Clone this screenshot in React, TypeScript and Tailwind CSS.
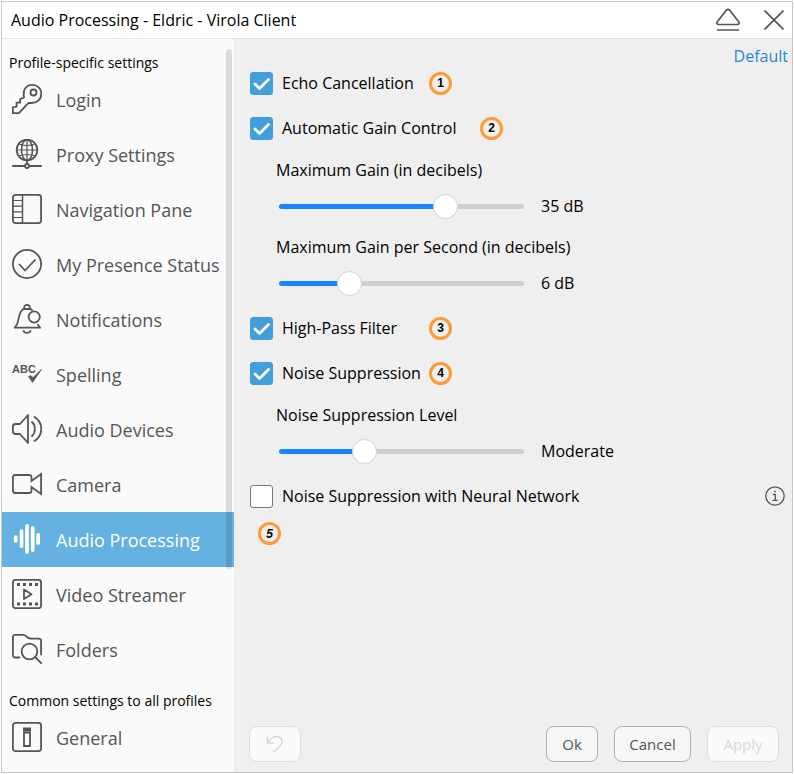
import { useState } from "react";
import type { CSSProperties, ReactNode } from "react";

function Icon({ children }: { children: ReactNode }) {
  return (
    <svg
      aria-hidden="true"
      className="mb-[2px] size-[30px] shrink-0"
      viewBox="0 0 30 30"
      fill="none"
      stroke="currentColor"
      strokeWidth="1.800"
      strokeLinejoin="round"
      strokeLinecap="round"
    >
      {children}
    </svg>
  );
}

const holes = [5, 11, 17, 23];

const profileItems: { label: string; icon: ReactNode }[] = [
  {
    label: "Login",
    icon: (
      <Icon>
        <path
          strokeLinejoin="miter"
          d="M12 13.200C10.600 6 14 .9 20.300.9c5.200 0 9 3.600 9 8.800 0 5.400-4 9.300-9.500 9.300h-3.200L6.800 29.200H.9v-5.700l3.700-1v-3.900h3.500v-3.400z"
        />
        <circle cx="21.500" cy="8.500" r="3" />
      </Icon>
    ),
  },
  {
    label: "Proxy Settings",
    icon: (
      <Icon>
        <circle cx="15" cy="11" r="10.300" />
        <ellipse cx="15" cy="11" rx="5.500" ry="10.300" strokeWidth="1.500" />
        <path d="M15 .5v21M7 5c4.500 2 11.500 2 16 0M7 17c4.500-2 11.500-2 16 0M4.500 11h21" strokeWidth="1.200" />
        <circle cx="15" cy="27" r="2" />
        <path d="M15 21.500V25M.9 27H13M17 27h12.200" />
      </Icon>
    ),
  },
  {
    label: "Navigation Pane",
    icon: (
      <Icon>
        <rect x=".9" y=".9" width="28.200" height="28.200" rx="2.500" />
        <path d="M10.500 1v28" strokeWidth="1.500" />
        <path d="M1 6.500h9.500M1 12.200h9.500M1 17.800h9.500M1 23.500h9.500" strokeWidth="1.200" />
      </Icon>
    ),
  },
  {
    label: "My Presence Status",
    icon: (
      <Icon>
        <circle cx="15" cy="15" r="14.100" />
        <path d="m7.500 15.500 5.500 6L23 11" />
      </Icon>
    ),
  },
  {
    label: "Notifications",
    icon: (
      <Icon>
        <path d="M12 5C12 2.500 13 .9 15 .9S18 2.500 18 5zM11.500 5C8 7 7.200 11 6.500 15c-.5 4-1.300 6-3.800 8.700h25.400c-.9-1-1.600-1.800-2.100-3M18.500 5l1.500 1" />
        <circle cx="22.200" cy="13" r="5.600" />
        <path d="M11.500 27c1.500 2.600 5.500 2.600 7 0" />
      </Icon>
    ),
  },
  {
    label: "Spelling",
    icon: (
      <Icon>
        <text
          x="0"
          y="14"
          fill="currentColor"
          stroke="none"
          fontFamily="Liberation Sans, sans-serif"
          fontWeight="700"
          fontSize="11"
        >
          ABC
        </text>
        <path d="m17 17.500 2-.8 2 2.100L29.300 10.500 20.700 23z" fill="currentColor" strokeWidth="1" />
      </Icon>
    ),
  },
  {
    label: "Audio Devices",
    icon: (
      <Icon>
        <path d="M16 1v28l-8-9H3.700C2 20 .9 19 .9 17.500v-5c0-1.500 1.100-2.500 2.800-2.500H8z" />
        <path d="M20 8c3.800 3.500 3.800 10.500 0 14M22.500 3c9 5.500 9 18.500 0 24" />
      </Icon>
    ),
  },
  {
    label: "Camera",
    icon: (
      <Icon>
        <path
          strokeLinejoin="miter"
          d="M19.500 12V8.500c0-1.600-.8-2.500-2.300-2.500h-14C1.700 6 .9 6.900.9 8.500v13C.9 23.100 1.700 24 3.200 24h14c1.500 0 2.300-.9 2.300-2.500V18l9.600 7V5z"
        />
      </Icon>
    ),
  },
  {
    label: "Audio Processing",
    icon: (
      <Icon>
        <path d="M3.700 13v4M9.500 7.200v15M15 1.900v26.200M20.700 3.900v22.200M26.200 10.800V19" strokeWidth="3.700" />
      </Icon>
    ),
  },
  {
    label: "Video Streamer",
    icon: (
      <Icon>
        <rect x=".9" y=".9" width="28.200" height="28.200" rx="2.500" />
        <path d="M12 10.500v9.500l7.500-4.800z" />
        {holes.map((x) => (
          <g key={x} fill="currentColor" stroke="none">
            <rect x={x} y="4" width="3" height="3" />
            <rect x={x} y="23.500" width="3" height="3" />
          </g>
        ))}
      </Icon>
    ),
  },
  {
    label: "Folders",
    icon: (
      <Icon>
        <path d="M7.500 23.500H3.200C1.700 23.500.9 22.500.9 21V3.200C.9 1.700 1.700.9 3.200.9h8.300c2.500 0 3.500 3.500 7 3.700h8.200c1.500 0 2.400.9 2.400 2.400V20.500" />
        <circle cx="17.500" cy="17.500" r="7.800" />
        <path d="m23 23 6.200 6.200" />
      </Icon>
    ),
  },
];

function NavItem({ label, icon, active, onSelect }: { label: string; icon: ReactNode; active: boolean; onSelect: () => void }) {
  return (
    <button
      type="button"
      aria-current={active ? "page" : undefined}
      onClick={onSelect}
      className={
        active
          ? "flex h-[55px] w-full items-center gap-[14px] bg-[#65b1e1] px-[10px] text-left text-lg whitespace-nowrap text-white"
          : "flex h-[55px] w-full items-center gap-[14px] px-[10px] text-left text-lg whitespace-nowrap text-[#555]"
      }
    >
      {icon}
      {label}
    </button>
  );
}

function Badge({ children, italic }: { children: ReactNode; italic?: boolean }) {
  return (
    <span
      className={
        italic
          ? "flex size-[23px] items-center justify-center rounded-full border-3 border-[#ff9a35] font-['Liberation_Sans',sans-serif] text-xs font-bold italic"
          : "flex size-[23px] items-center justify-center rounded-full border-3 border-[#ff9a35] font-['Liberation_Sans',sans-serif] text-xs font-bold"
      }
    >
      {children}
    </span>
  );
}

function CheckRow({ label, initial, wide, children }: { label: string; initial: boolean; wide?: boolean; children?: ReactNode }) {
  const [checked, setChecked] = useState(initial);
  return (
    <div className="flex h-6 items-center">
      <label className="flex items-center gap-[9px] whitespace-nowrap">
        <span className="grid place-items-center">
          <input
            type="checkbox"
            checked={checked}
            onChange={(e) => setChecked(e.target.checked)}
            className="peer col-start-1 row-start-1 size-[23px] appearance-none rounded-[3px] border border-[#777] bg-white checked:border-[#419fdb] checked:bg-[#419fdb]"
          />
          <svg
            aria-hidden="true"
            viewBox="0 0 23 23"
            fill="none"
            stroke="white"
            strokeWidth="2.800"
            strokeLinecap="round"
            strokeLinejoin="round"
            className="pointer-events-none invisible col-start-1 row-start-1 size-[23px] peer-checked:visible"
          >
            <path d="m5 12 4.500 4.500L18.500 7.500" />
          </svg>
        </span>
        <span className={wide ? "w-[198px]" : "min-w-[147px]"}>{label}</span>
      </label>
      {children}
    </div>
  );
}

interface SliderProps {
  id: string;
  label: string;
  min: number;
  max: number;
  initial: number;
  format: (value: number) => string;
}

function SliderField({ id, label, min, max, initial, format }: SliderProps) {
  const [value, setValue] = useState(initial);
  const fill = { "--fill": `${((value - min) / (max - min)) * 100}%` } as CSSProperties;
  return (
    <div className="pl-[26px]">
      <label htmlFor={id} className="flex h-10 items-center">
        {label}
      </label>
      <div className="flex h-8 items-center gap-[17px] pl-[3px]">
        <input
          id={id}
          type="range"
          min={min}
          max={max}
          value={value}
          onChange={(e) => setValue(Number(e.target.value))}
          style={fill}
          className="h-[25px] w-[245px] appearance-none bg-transparent [&::-webkit-slider-runnable-track]:h-[5px] [&::-webkit-slider-runnable-track]:rounded-full [&::-webkit-slider-runnable-track]:bg-[linear-gradient(to_right,#1a84ff_var(--fill),#cfcfcf_var(--fill))] [&::-webkit-slider-thumb]:-mt-[10px] [&::-webkit-slider-thumb]:size-[25px] [&::-webkit-slider-thumb]:appearance-none [&::-webkit-slider-thumb]:rounded-full [&::-webkit-slider-thumb]:border [&::-webkit-slider-thumb]:border-[#d4d4d4] [&::-webkit-slider-thumb]:bg-white"
        />
        <output htmlFor={id}>{format(value)}</output>
      </div>
    </div>
  );
}

const levels = ["Low", "Moderate", "High", "Very High"];

export default function App() {
  const [active, setActive] = useState("Audio Processing");
  return (
    <div className="flex min-h-screen bg-white p-px font-['Open_Sans','Noto_Sans',sans-serif] text-base leading-5 text-black">
      <div className="flex grow flex-col border border-[#c8c8c8]">
        <header className="flex h-[37px] items-center justify-between border-b border-[#e4e4e4] bg-white pr-2 pl-[9px]">
          <h1>Audio Processing - Eldric - Virola Client</h1>
          <div className="flex items-center gap-6 text-[#555]">
            <button type="button" aria-label="Keep on top">
              <svg viewBox="0 0 24 24" className="size-6" fill="none" stroke="currentColor" strokeWidth="1.700" strokeLinejoin="round">
                <path d="M10.300 2.300 1.500 13.500C.4 15.200 1 16.500 2.700 16.500h18.600c1.700 0 2.300-1.300 1.200-3L13.700 2.300c-1-1.200-2.400-1.200-3.400 0zM1 22h22" />
              </svg>
            </button>
            <button type="button" aria-label="Close">
              <svg viewBox="0 0 20 20" className="size-5" fill="none" stroke="currentColor" strokeWidth="1.700">
                <path d="m.5.5 19 19M19.500.5l-19 19" />
              </svg>
            </button>
          </div>
        </header>

        <div className="flex grow">
          <nav aria-label="Settings" className="relative w-[232px] shrink-0 bg-[#fafafa]">
            <h2 className="flex h-[33px] items-end px-[7px] text-sm leading-[18px]">Profile-specific settings</h2>
            {profileItems.map((item) => (
              <NavItem key={item.label} {...item} active={active === item.label} onSelect={() => setActive(item.label)} />
            ))}
            <h2 className="flex h-[33px] items-end px-[7px] text-sm leading-[18px]">Common settings to all profiles</h2>
            <NavItem
              label="General"
              active={active === "General"}
              onSelect={() => setActive("General")}
              icon={
                <Icon>
                  <rect x=".9" y=".9" width="28.200" height="28.200" rx="2.500" />
                  <path d="M11 5.500h8v4h-8z" fill="currentColor" stroke="none" />
                  <path d="M12 10.500h6V24h-6z" strokeLinejoin="miter" />
                </Icon>
              }
            />
            <div className="pointer-events-none absolute top-[10px] right-[2px] h-[520px] w-[6px] rounded-full bg-black/12" />
          </nav>

          <main className="flex grow flex-col bg-[#efefef] pt-[7px] pl-4">
            <button type="button" className="mr-1 self-end text-[#1f8ad2]">
              Default
            </button>
            <div className="mt-[5px] flex flex-col gap-[21px]">
              <CheckRow label="Echo Cancellation" initial={true}>
                <Badge>1</Badge>
              </CheckRow>
              <CheckRow label="Automatic Gain Control" initial={true} wide>
                <Badge>2</Badge>
              </CheckRow>
            </div>
            <div className="mt-[10px] mb-[17px] flex flex-col gap-[5px]">
              <SliderField id="max-gain" label="Maximum Gain (in decibels)" min={0} max={50} initial={35} format={(v) => `${v} dB`} />
              <SliderField id="gain-rate" label="Maximum Gain per Second (in decibels)" min={1} max={20} initial={6} format={(v) => `${v} dB`} />
            </div>
            <div className="flex flex-col gap-[21px]">
              <CheckRow label="High-Pass Filter" initial={true}>
                <Badge>3</Badge>
              </CheckRow>
              <CheckRow label="Noise Suppression" initial={true}>
                <Badge>4</Badge>
              </CheckRow>
            </div>
            <div className="mt-[10px] mb-[17px]">
              <SliderField id="noise-level" label="Noise Suppression Level" min={0} max={3} initial={1} format={(v) => levels[v]} />
            </div>
            <div className="flex items-center justify-between pr-[7px]">
              <CheckRow label="Noise Suppression with Neural Network" initial={false} />
              <button type="button" aria-label="About noise suppression with neural network" className="text-[#555]">
                <svg viewBox="0 0 20 20" className="size-5" fill="none" stroke="currentColor" strokeWidth="1.300">
                  <circle cx="10" cy="10" r="9.200" />
                  <path d="M8 8.500h2.300V14M7.500 14.300h5.200" />
                  <path d="M9.200 5.500h1.600" strokeWidth="1.700" />
                </svg>
              </button>
            </div>
            <div className="mt-[14px] pl-2">
              <Badge italic>5</Badge>
            </div>

            <footer className="mt-auto flex gap-4 pr-[13px] pb-[10px] text-[15px] text-[#555]">
              <button
                type="button"
                disabled
                aria-label="Undo"
                className="mr-auto -ml-px flex h-9 w-[52px] items-center justify-center rounded-lg border border-[#dedede] bg-[#fafafa] text-[#d8d8d8]"
              >
                <svg viewBox="0 0 18 20" className="h-5 w-[18px]" fill="none" stroke="currentColor" strokeWidth="1.400">
                  <path d="M1.500 2.500V9H8M1.500 9C4 5 7 2.500 10.500 2.500c5.500 0 7 5.500 3.800 9L7.500 18.500" />
                </svg>
              </button>
              <button type="button" className="h-9 w-[52px] rounded-lg border border-[#b0b0b0] bg-[#f5f6f6]">
                Ok
              </button>
              <button type="button" className="h-9 w-[77px] rounded-lg border border-[#b0b0b0] bg-[#f5f6f6]">
                Cancel
              </button>
              <button type="button" disabled className="h-9 w-[72px] rounded-lg border border-[#dedede] bg-[#fafafa] text-[#d8d8d8]">
                Apply
              </button>
            </footer>
          </main>
        </div>
      </div>
    </div>
  );
}
